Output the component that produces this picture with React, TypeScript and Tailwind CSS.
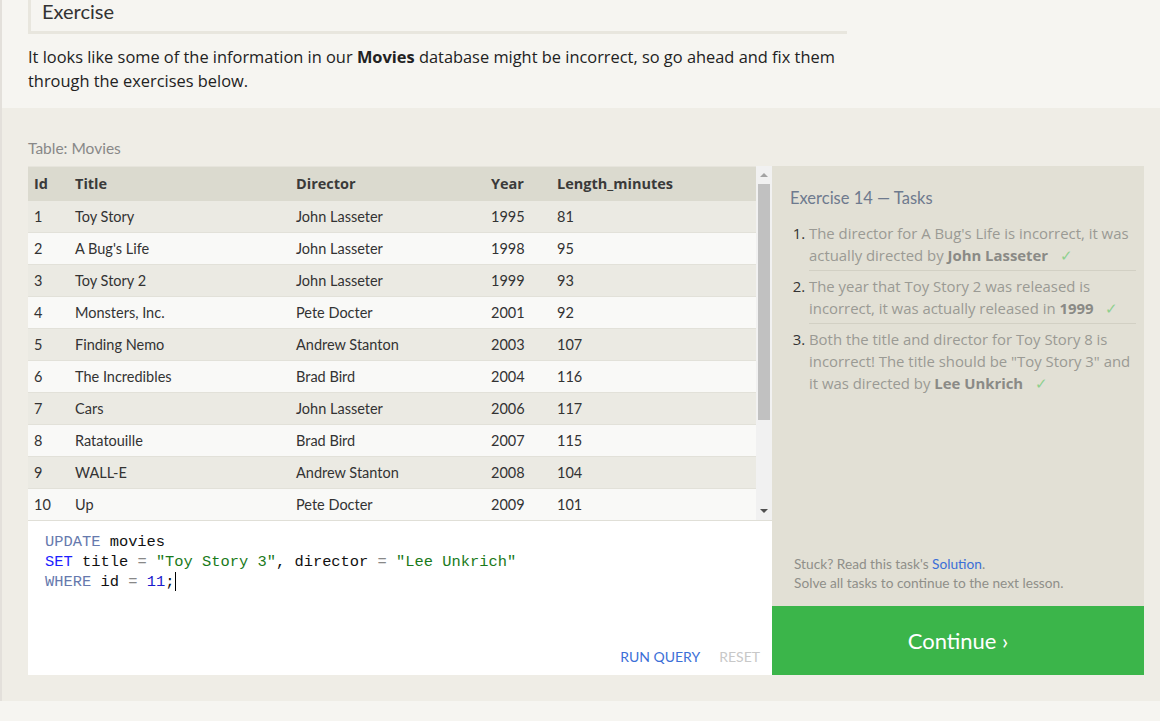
import React from "react"

const movies = [
  [1, "Toy Story", "John Lasseter", 1995, 81],
  [2, "A Bug's Life", "John Lasseter", 1998, 95],
  [3, "Toy Story 2", "John Lasseter", 1999, 93],
  [4, "Monsters, Inc.", "Pete Docter", 2001, 92],
  [5, "Finding Nemo", "Andrew Stanton", 2003, 107],
  [6, "The Incredibles", "Brad Bird", 2004, 116],
  [7, "Cars", "John Lasseter", 2006, 117],
  [8, "Ratatouille", "Brad Bird", 2007, 115],
  [9, "WALL-E", "Andrew Stanton", 2008, 104],
  [10, "Up", "Pete Docter", 2009, 101],
  [11, "Toy Story 3", "Lee Unkrich", 2010, 103],
]

function Check() {
  return <span className="ml-[12px] text-[#8fd08f]">✓</span>
}

function MoviesTable() {
  return (
    <div className="flex h-[355px] border-b border-[#e0dfd7]">
      <div className="flex-1 overflow-hidden border-t border-[#e6e4dc]">
        <div className="grid h-[34px] grid-cols-[41px_221px_195px_66px_1fr] items-center bg-[#dbdacf] pl-[6px] font-['Open_Sans',sans-serif] text-[14.5px] font-bold text-[#3a3a3a]">
          <div>Id</div>
          <div>Title</div>
          <div>Director</div>
          <div>Year</div>
          <div>Length_minutes</div>
        </div>
        {movies.map((m, i) => (
          <div
            key={m[0]}
            className={`grid h-[32px] grid-cols-[41px_221px_195px_66px_1fr] items-center border-b border-[#e2e1d9] pl-[6px] text-[14.5px] text-[#333] ${
              i % 2 === 0 ? "bg-[#ebeae3]" : "bg-[#f9f9f7]"
            }`}
          >
            <div>{m[0]}</div>
            <div>{m[1]}</div>
            <div>{m[2]}</div>
            <div>{m[3]}</div>
            <div>{m[4]}</div>
          </div>
        ))}
      </div>
      {/* scrollbar */}
      <div className="flex w-[16px] flex-col items-center bg-[#f1f1f1]">
        <div className="flex h-[18px] items-center justify-center">
          <div className="h-0 w-0 border-x-[4px] border-b-[4px] border-x-transparent border-b-[#a3a3a3]" />
        </div>
        <div className="h-[236px] w-[12px] bg-[#c1c1c1]" />
        <div className="flex-1" />
        <div className="flex h-[18px] items-center justify-center">
          <div className="h-0 w-0 border-x-[4px] border-t-[4px] border-x-transparent border-t-[#505050]" />
        </div>
      </div>
    </div>
  )
}

function Editor() {
  return (
    <div className="flex h-[154px] flex-col bg-white">
      <div className="flex-1 whitespace-pre pl-[17px] pt-[11px] font-['Liberation_Mono','DejaVu_Sans_Mono',monospace] text-[15.4px] leading-[20px] text-[#111]">
        <div>
          <span className="text-[#6679ad]">UPDATE</span> movies
        </div>
        <div>
          <span className="text-[#1d1dff]">SET</span> title <span className="text-[#888]">=</span>{" "}
          <span className="text-[#1a7a1a]">"Toy Story 3"</span>, director <span className="text-[#888]">=</span>{" "}
          <span className="text-[#1a7a1a]">"Lee Unkrich"</span>
        </div>
        <div>
          <span className="text-[#6679ad]">WHERE</span> id <span className="text-[#888]">=</span>{" "}
          <span className="text-[#1a1acc]">11</span>;<span className="ml-px inline-block h-[19px] w-px bg-black align-middle" />
        </div>
      </div>
      <div className="flex justify-end gap-[19px] pb-[8px] pr-[12px] text-[14px] leading-[20px]">
        <span className="text-[#3c6fd7]">RUN QUERY</span>
        <span className="text-[#c8c8c8]">RESET</span>
      </div>
    </div>
  )
}

function Tasks() {
  return (
    <div className="flex w-[372px] flex-col">
      <div className="flex h-[440px] flex-col bg-[#e2e0d5] pr-[8px]">
        <div className="pl-[18px] pt-[20px] text-[16.5px] leading-[24px] text-[#6e7a8e]">Exercise 14 — Tasks</div>
        <ol className="ml-[37px] mt-[8px] list-decimal font-['Open_Sans',sans-serif] text-[14.9px] leading-[22px] text-[#9a9a94] marker:text-[#333]">
          <li className="border-b border-[#d2d0c4] py-[4px]">
            The director for A Bug's Life is incorrect, it was actually directed by{" "}
            <b className="text-[#8a8a86]">John Lasseter</b>
            <Check />
          </li>
          <li className="border-b border-[#d2d0c4] py-[4px]">
            The year that Toy Story 2 was released is incorrect, it was actually released in{" "}
            <b className="text-[#8a8a86]">1999</b>
            <Check />
          </li>
          <li className="py-[4px]">
            Both the title and director for Toy Story 8 is incorrect! The title should be "Toy Story 3" and it was
            directed by <b className="text-[#8a8a86]">Lee Unkrich</b>
            <Check />
          </li>
        </ol>
        <div className="mt-auto pb-[14px] pl-[22px] text-[13.7px] leading-[19px] text-[#8f8f89]">
          <div>
            Stuck? Read this task's <span className="text-[#3c6fd7]">Solution</span>.
          </div>
          <div>Solve all tasks to continue to the next lesson.</div>
        </div>
      </div>
      <div className="flex h-[69px] items-center justify-center bg-[#3bb54a] text-[22px] text-white">Continue ›</div>
    </div>
  )
}

export default function App() {
  return (
    <div className="w-[1160px] font-['Lato','Noto_Sans',sans-serif]">
      <div className="border-l-2 border-[#e3e0db] bg-[#f6f5f1] pb-[15px]">
        <div className="ml-[26px] h-[34px] w-[819px] border-b-[3px] border-l-[3px] border-[#e8e6de] pl-[11px] text-[20px] leading-[23px] text-[#333]">
          Exercise
        </div>
        <p className="ml-[26px] mt-[11px] w-[822px] font-['Open_Sans',sans-serif] text-[16.4px] leading-[24px] text-[#222]">
          It looks like some of the information in our <b>Movies</b> database might be incorrect, so go ahead and fix
          them through the exercises below.
        </p>
      </div>
      <div className="border-l-2 border-[#e3e0db] bg-[#efede6] pb-[26px] pl-[26px] pt-[30px]">
        <div className="mb-[8px] text-[15.5px] leading-[20px] text-[#888]">Table: Movies</div>
        <div className="flex">
          <div className="w-[744px]">
            <MoviesTable />
            <Editor />
          </div>
          <Tasks />
        </div>
      </div>
      <div className="h-[20px] bg-[#f6f5f1]" />
    </div>
  )
}
